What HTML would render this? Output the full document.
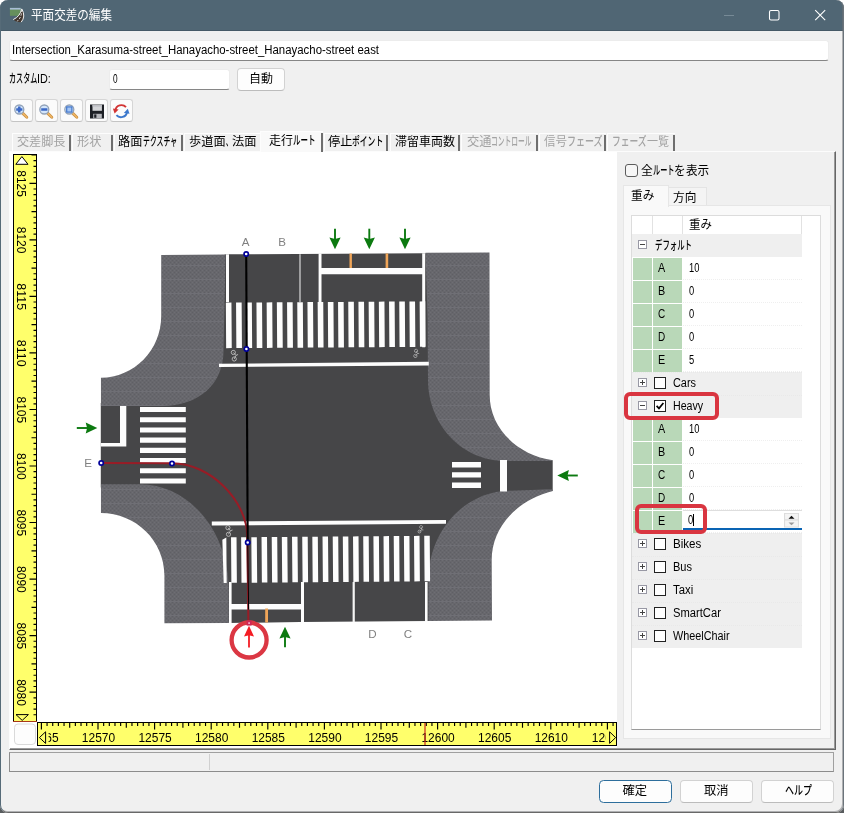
<!DOCTYPE html>
<html lang="ja">
<head>
<meta charset="utf-8">
<title>平面交差の編集</title>
<style>
*{box-sizing:border-box;margin:0;padding:0}
html,body{width:844px;height:813px;overflow:hidden;background:#fff}
body{font-family:"Liberation Sans","Noto Sans CJK JP",sans-serif;font-size:12px;color:#000;position:relative;line-height:1.3}
.abs{position:absolute}
#win{position:absolute;left:0;top:0;width:844px;height:813px;will-change:transform;background:#f0f0f0;border-radius:8px;overflow:hidden}
#frame{position:absolute;left:0;top:0;width:844px;height:813px;border-radius:8px;border:1px solid #566b78;border-top:none;border-right:1px solid #6b747b;border-bottom:1px solid #686868;box-shadow:inset -1px -1px 0 rgba(110,112,116,.5);z-index:50;pointer-events:none}
#cnr{position:absolute;left:0;top:800px;width:844px;height:13px;background:#585c5e}
#title{position:absolute;left:0;top:0;width:844px;height:31px;background:#506674;border-bottom:1px solid #465a67}
.tb{position:absolute;background:#fff;border:1px solid #ececec;border-bottom:1px solid #868686;border-radius:3px;white-space:nowrap;overflow:hidden}
.btn{position:absolute;background:#fdfdfd;border:1px solid #d2d2d2;border-bottom-color:#bcbcbc;border-radius:4px;white-space:nowrap}
.tool{position:absolute;top:99px;width:23px;height:23px;background:#fbfbfb;border:1px solid #d6d6d6;border-bottom-color:#c4c4c4;border-radius:3px}
.tool svg{position:absolute;left:0;top:.5px}
.tab{position:absolute;top:133px;height:18px;border-left:1px solid #fdfdfd;border-top:1px solid #fdfdfd;white-space:nowrap;overflow:hidden;background:#f0f0f0}
.tab i{position:absolute;right:0;top:1px;bottom:0;width:2px;background:#6e6e6e}
.tab.dis{color:#a3a3a3}
.tab.sel{top:131px;height:21px;background:#f9f9f9;z-index:3}
.tab .t{position:absolute;left:0;top:1px;white-space:nowrap}
.tab.sel .t{top:2px}
</style>
</head>
<body>
<div id="cnr"></div>
<div id="win">
<div id="title">
<svg class="abs" style="left:8px;top:7px" width="18" height="18" viewBox="0 0 18 18">
<rect x="1.9" y="0.9" width="10.8" height="7.9" fill="#66905c"/>
<rect x="1.9" y="0.9" width="10.8" height="1.7" fill="#a9bdd6"/>
<path d="M13.7 1.7 Q12.6 9.4 5.3 12.7 L8.6 14.8 L13.2 15.3 Q18.2 9.6 13.7 1.7 Z" fill="#43372f"/>
<path d="M13.6 1.9 Q12.4 9.2 5.2 12.6" stroke="#f2f2f2" stroke-width="1" fill="none"/>
<path d="M13.8 1.9 Q18 9.4 13.2 15.2" stroke="#f2f2f2" stroke-width="1" fill="none"/>
<path d="M13.7 2.4 Q14.2 10 8.8 14.6" stroke="#f2f2f2" stroke-width="0.9" stroke-dasharray="2.4 1.5" fill="none"/>
</svg>
<div class="abs" style="left:31px;top:7px;color:#fff;white-space:nowrap"><span style="display:inline-block;width:81.00px;height:16.4px;vertical-align:top;"><span style="display:inline-block;white-space:nowrap;font-size:12.60px;transform:scaleX(0.9184);transform-origin:0 0">平面交差の編集</span></span></div>
<svg class="abs" style="left:720px;top:6px" width="120" height="20" viewBox="720 6 120 20">
<path d="M724 15.5H734" stroke="#778a96" stroke-width="1"/>
<rect x="769.5" y="10.5" width="9.5" height="9.5" rx="1.5" fill="none" stroke="#fff" stroke-width="1.1"/>
<path d="M815.2 10.2L825.2 20.2M825.2 10.2L815.2 20.2" stroke="#fff" stroke-width="1.1"/>
</svg>
</div>
<div class="tb" style="left:9px;top:40px;width:820px;height:21px"><div class="abs" style="left:2px;top:2px"><span style="display:inline-block;width:367.00px;height:15.6px;vertical-align:top;"><span style="display:inline-block;white-space:nowrap;font-size:12.00px;transform:scaleX(0.9503);transform-origin:0 0">Intersection_Karasuma-street_Hanayacho-street_Hanayacho-street east</span></span></div></div>
<div class="abs" style="left:8.7px;top:71.6px;white-space:nowrap"><span style="display:inline-block;width:28.30px;height:15.6px;vertical-align:top;font-weight:500;"><span style="display:inline-block;white-space:nowrap;font-size:12.00px;transform:scaleX(0.5896);transform-origin:0 0">カスタム</span></span><span style="display:inline-block;width:13.80px;height:15.6px;vertical-align:top;"><span style="display:inline-block;white-space:nowrap;font-size:12.00px;transform:scaleX(0.9000);transform-origin:0 0">ID:</span></span></div>
<div class="tb" style="left:109px;top:69px;width:121px;height:21px"><div class="abs" style="left:2.6px;top:2px"><span style="display:inline-block;width:4.60px;height:15.6px;vertical-align:top;font-weight:500;"><span style="display:inline-block;white-space:nowrap;font-size:12.00px;transform:scaleX(0.6893);transform-origin:0 0">0</span></span></div></div>
<div class="btn" style="left:237px;top:68px;width:48px;height:23px"><div class="abs" style="left:11px;top:3px"><span style="display:inline-block;width:24.00px;height:15.6px;vertical-align:top;"><span style="display:inline-block;white-space:nowrap;font-size:12.00px;transform:scaleX(1.0000);transform-origin:0 0">自動</span></span></div></div>
<div class="tool" style="left:10px"><svg width="20" height="20" viewBox="0 0 20 20"><path d="M11.8 12.4L15.8 16.2" stroke="#c98e40" stroke-width="2.9" stroke-linecap="round"/><path d="M11.8 12.4L15.8 16.2" stroke="#efb666" stroke-width="1.5" stroke-linecap="round"/><circle cx="8.3" cy="8.5" r="4.5" fill="#d3e5fb" stroke="#93a3b8" stroke-width="1.3"/><path d="M5.2 8.5H11.4M8.3 5.4V11.6" stroke="#3b68c6" stroke-width="2.5"/></svg></div>
<div class="tool" style="left:35px"><svg width="20" height="20" viewBox="0 0 20 20"><path d="M11.8 12.4L15.8 16.2" stroke="#c98e40" stroke-width="2.9" stroke-linecap="round"/><path d="M11.8 12.4L15.8 16.2" stroke="#efb666" stroke-width="1.5" stroke-linecap="round"/><circle cx="8.3" cy="8.5" r="4.5" fill="#d3e5fb" stroke="#93a3b8" stroke-width="1.3"/><path d="M5.2 8.5H11.4" stroke="#3b68c6" stroke-width="2.5"/></svg></div>
<div class="tool" style="left:60px"><svg width="20" height="20" viewBox="0 0 20 20"><path d="M11.8 12.4L15.8 16.2" stroke="#c98e40" stroke-width="2.9" stroke-linecap="round"/><path d="M11.8 12.4L15.8 16.2" stroke="#efb666" stroke-width="1.5" stroke-linecap="round"/><circle cx="8.3" cy="8.5" r="4.5" fill="#d3e5fb" stroke="#93a3b8" stroke-width="1.3"/><rect x="5.7" y="5.9" width="5.2" height="5.2" fill="#a4c6f4" stroke="#4377cc" stroke-width="1.2"/></svg></div>
<div class="tool" style="left:85px"><svg width="20" height="20" viewBox="0 0 20 20"><path d="M4 3.5H18V17.5H4Z" fill="#1d1f25"/><rect x="6.5" y="3.8" width="9.4" height="6" fill="#d4d5d8"/><rect x="6.5" y="3.8" width="9.4" height="1.8" fill="#bdbec3"/><rect x="7.2" y="12.8" width="8.6" height="4.7" fill="#b5b6bb"/><rect x="8.2" y="13.4" width="2.2" height="3.4" fill="#1d1f25"/></svg></div>
<div class="tool" style="left:110px"><svg width="20" height="20" viewBox="0 0 20 20"><path d="M4.3 9.4A6.2 6.2 0 0 1 15 6.2" stroke="#d23434" stroke-width="1.9" fill="none"/><path d="M1.9 7.6L7.6 8.4L3.6 12.6Z" fill="#d23434"/><path d="M16.1 11A6.2 6.2 0 0 1 5.4 14.2" stroke="#3c78cc" stroke-width="1.9" fill="none"/><path d="M18.5 12.8L12.8 12L16.8 7.8Z" fill="#3c78cc"/></svg></div>
<div class="tab dis" style="left:12px;width:59px"><div class="t" style="left:4.0px"><span style="display:inline-block;width:48.50px;height:16.0px;vertical-align:top;"><span style="display:inline-block;white-space:nowrap;font-size:12.30px;transform:scaleX(0.9858);transform-origin:0 0">交差脚長</span></span></div><i></i></div>
<div class="tab dis" style="left:72px;width:41px"><div class="t" style="left:3.5px"><span style="display:inline-block;width:24.50px;height:16.0px;vertical-align:top;"><span style="display:inline-block;white-space:nowrap;font-size:12.30px;transform:scaleX(0.9959);transform-origin:0 0">形状</span></span></div><i></i></div>
<div class="tab " style="left:114px;width:69px"><div class="t" style="left:3.0px"><span style="display:inline-block;width:24.50px;height:16.0px;vertical-align:top;"><span style="display:inline-block;white-space:nowrap;font-size:12.30px;transform:scaleX(0.9959);transform-origin:0 0">路面</span></span><span style="display:inline-block;width:34.50px;height:16.0px;vertical-align:top;font-weight:500;"><span style="display:inline-block;white-space:nowrap;font-size:12.30px;transform:scaleX(0.5610);transform-origin:0 0">テクスチャ</span></span></div><i></i></div>
<div class="tab " style="left:184px;width:78px"><div class="t" style="left:4.0px"><span style="display:inline-block;width:36.70px;height:16.0px;vertical-align:top;"><span style="display:inline-block;white-space:nowrap;font-size:12.30px;transform:scaleX(0.9946);transform-origin:0 0">歩道面</span></span><span style="display:inline-block;width:6.00px;height:16.0px;vertical-align:top;font-weight:500;"><span style="display:inline-block;white-space:nowrap;font-size:12.30px;transform:scaleX(0.4878);transform-origin:0 0">、</span></span><span style="display:inline-block;width:24.50px;height:16.0px;vertical-align:top;"><span style="display:inline-block;white-space:nowrap;font-size:12.30px;transform:scaleX(0.9959);transform-origin:0 0">法面</span></span></div><i></i></div>
<div class="tab sel" style="left:260px;width:63px"><div class="t" style="left:8.0px"><span style="display:inline-block;width:24.00px;height:16.0px;vertical-align:top;"><span style="display:inline-block;white-space:nowrap;font-size:12.30px;transform:scaleX(0.9756);transform-origin:0 0">走行</span></span><span style="display:inline-block;width:22.50px;height:16.0px;vertical-align:top;font-weight:500;"><span style="display:inline-block;white-space:nowrap;font-size:12.30px;transform:scaleX(0.6098);transform-origin:0 0">ルート</span></span></div><i></i></div>
<div class="tab " style="left:324px;width:64px"><div class="t" style="left:2.5px"><span style="display:inline-block;width:24.30px;height:16.0px;vertical-align:top;"><span style="display:inline-block;white-space:nowrap;font-size:12.30px;transform:scaleX(0.9878);transform-origin:0 0">停止</span></span><span style="display:inline-block;width:31.20px;height:16.0px;vertical-align:top;font-weight:500;"><span style="display:inline-block;white-space:nowrap;font-size:12.30px;transform:scaleX(0.6341);transform-origin:0 0">ポイント</span></span></div><i></i></div>
<div class="tab " style="left:390px;width:70px"><div class="t" style="left:3.5px"><span style="display:inline-block;width:60.00px;height:16.0px;vertical-align:top;"><span style="display:inline-block;white-space:nowrap;font-size:12.30px;transform:scaleX(0.9756);transform-origin:0 0">滞留車両数</span></span></div><i></i></div>
<div class="tab dis" style="left:461px;width:77px"><div class="t" style="left:4.5px"><span style="display:inline-block;width:24.50px;height:16.0px;vertical-align:top;"><span style="display:inline-block;white-space:nowrap;font-size:12.30px;transform:scaleX(0.9959);transform-origin:0 0">交通</span></span><span style="display:inline-block;width:40.50px;height:16.0px;vertical-align:top;font-weight:500;"><span style="display:inline-block;white-space:nowrap;font-size:12.30px;transform:scaleX(0.5488);transform-origin:0 0">コントロール</span></span></div><i></i></div>
<div class="tab dis" style="left:539px;width:67px"><div class="t" style="left:4.0px"><span style="display:inline-block;width:23.00px;height:16.0px;vertical-align:top;"><span style="display:inline-block;white-space:nowrap;font-size:12.30px;transform:scaleX(0.9350);transform-origin:0 0">信号</span></span><span style="display:inline-block;width:36.00px;height:16.0px;vertical-align:top;font-weight:500;"><span style="display:inline-block;white-space:nowrap;font-size:12.30px;transform:scaleX(0.7317);transform-origin:0 0">フェーズ</span></span></div><i></i></div>
<div class="tab dis" style="left:607px;width:68px"><div class="t" style="left:4.0px"><span style="display:inline-block;width:35.00px;height:16.0px;vertical-align:top;font-weight:500;"><span style="display:inline-block;white-space:nowrap;font-size:12.30px;transform:scaleX(0.7114);transform-origin:0 0">フェーズ</span></span><span style="display:inline-block;width:22.00px;height:16.0px;vertical-align:top;"><span style="display:inline-block;white-space:nowrap;font-size:12.30px;transform:scaleX(0.8943);transform-origin:0 0">一覧</span></span></div><i></i></div>
<div class="abs" style="left:9px;top:151px;width:827px;height:599px;background:#f0f0f0;border-left:1px solid #fcfcfc;border-top:1px solid #fcfcfc;border-right:1px solid #666;border-bottom:1px solid #666"></div>
<div class="abs" style="left:10px;top:152px;width:825px;height:597px;border-right:1px solid #9a9a9a;border-bottom:1px solid #9a9a9a"></div>
<svg class="abs" style="left:10px;top:152px" width="607" height="596" viewBox="10 152 607 596" font-family="'Liberation Sans',sans-serif">
<rect x="10" y="152" width="607" height="597" fill="#fff"/>
<path d="M222.5 255.6 L226 254.3 L425 253.2 L428.5 253.6 L431 320 L431.5 386 L470 432 L506 457.5 L540 459.8 L552.7 460.7 L552.7 490.7 L540 491.8 L509 494.5 L470 520 L432 574 L431.5 619 L429 621 L300 622 L228.8 623 L225.5 621 L225.5 592 L200 528 L138 487.5 L100.8 487.5 L100.8 403 L160 403 L200 385 L220.5 349 Z" fill="#464648"/>
<clipPath id="cl"><rect x="100.8" y="250" width="451.9" height="380"/></clipPath>
<defs><pattern id="tx" width="4" height="14" patternUnits="userSpaceOnUse"><rect width="4" height="14" fill="#67676c"/><path d="M0 0h1v1h-1zM2 2h1v1h-1zM0 4h1v1h-1zM2 6h1v1h-1zM0 8h1v1h-1zM2 10h1v1h-1zM0 12h1v1h-1z" fill="#5f5f65"/><path d="M2 0h1v1h-1zM0 2h1v1h-1zM2 4h1v1h-1zM0 6h1v1h-1zM2 8h1v1h-1zM0 10h1v1h-1zM2 12h1v1h-1z" fill="#6e6e74"/><rect y="13" width="4" height="1" fill="#6f6f75"/></pattern></defs>
<path d="M161.2 255 L225.6 254.6 L223.5 351 C223.5 384.0 198.9 406.0 162.0 406.0 L100.8 406 L100.8 377.7 C134.2 377.7 161.2 350.1 161.2 316.0 Z" fill="url(#tx)" clip-path="url(#cl)"/>
<path d="M425.5 252.8 L489.5 252.5 L489.7 395 C489.7 431.5 523.4 461.0 565.0 461.0 L505 461 C462.5 461.0 428.0 424.7 428.0 380.0 L427.6 320 Z" fill="url(#tx)" clip-path="url(#cl)"/>
<path d="M575 488.5 C529.0 488.5 491.7 520.5 491.7 560.0 L492 620.4 L428.4 620.9 L428.5 580 C428.5 530.7 465.0 490.7 510.0 490.7 Z" fill="url(#tx)" clip-path="url(#cl)"/>
<path d="M100.8 484.2 L140 484.2 C189.0 484.2 228.8 531.6 228.8 590.0 L228.8 623 L164.4 623.3 L164.4 575 C164.4 540.7 135.9 512.9 100.8 512.9 Z" fill="url(#tx)" clip-path="url(#cl)"/>
<path d="M226.0 302h5.6v45.5h-5.6zM236.2 302h5.6v45.5h-5.6zM246.4 302h5.6v45.5h-5.6zM256.6 302h5.6v45.5h-5.6zM266.8 302h5.6v45.5h-5.6zM277.0 302h5.6v45.5h-5.6zM287.2 302h5.6v45.5h-5.6zM297.4 302h5.6v45.5h-5.6zM307.6 302h5.6v45.5h-5.6zM317.8 302h5.6v45.5h-5.6zM328.0 302h5.6v45.5h-5.6zM338.2 302h5.6v45.5h-5.6zM348.4 302h5.6v45.5h-5.6zM358.6 302h5.6v45.5h-5.6zM368.8 302h5.6v45.5h-5.6zM379.0 302h5.6v45.5h-5.6zM389.2 302h5.6v45.5h-5.6zM399.4 302h5.6v45.5h-5.6zM409.6 302h5.6v45.5h-5.6zM419.8 302h5.6v45.5h-5.6z" fill="#fdfdfd" transform="rotate(-0.38 325.5 324.7)"/>
<path d="M231.2 536.6h5.5v45.5h-5.5zM241.3 536.6h5.5v45.5h-5.5zM251.5 536.6h5.5v45.5h-5.5zM261.7 536.6h5.5v45.5h-5.5zM271.9 536.6h5.5v45.5h-5.5zM282.0 536.6h5.5v45.5h-5.5zM292.2 536.6h5.5v45.5h-5.5zM302.4 536.6h5.5v45.5h-5.5zM312.5 536.6h5.5v45.5h-5.5zM322.7 536.6h5.5v45.5h-5.5zM332.9 536.6h5.5v45.5h-5.5zM343.0 536.6h5.5v45.5h-5.5zM353.2 536.6h5.5v45.5h-5.5zM363.4 536.6h5.5v45.5h-5.5zM373.6 536.6h5.5v45.5h-5.5zM383.7 536.6h5.5v45.5h-5.5zM393.9 536.6h5.5v45.5h-5.5zM404.1 536.6h5.5v45.5h-5.5zM414.2 536.6h5.5v45.5h-5.5zM424.4 536.6h5.5v45.5h-5.5zM222.5 539 L226.5 536.6 L226.5 582.1 L223.5 582.1z" fill="#fdfdfd" transform="rotate(-0.45 325.5 559.3)"/>
<path d="M140 407.0h45.8v5.1h-45.8zM140 417.2h45.8v5.1h-45.8zM140 427.4h45.8v5.1h-45.8zM140 437.6h45.8v5.1h-45.8zM140 447.8h45.8v5.1h-45.8zM140 458.0h45.8v5.1h-45.8zM140 468.2h45.8v5.1h-45.8zM140 478.4h45.8v5.1h-45.8zM452 462.0h29v5.4h-29zM452 472.2h29v5.4h-29zM452 482.5h29v5.4h-29zM226 254.3h3v48h-3zM318.6 253.6h2.9v48.4h-2.9zM321 268h101.5v6.2h-101.5zM422.2 253.2h3v94h-3zM229 582h2.6v41h-2.6zM231 604h70.5v5.6h-70.5zM301 582h3v40h-3zM425 582h2.6v39.5h-2.6zM120 406h6.3v40.5h-6.3zM100.7 443h25.5v3.5h-25.5zM500 460h7v31.5h-7zM219 363.8 L428.8 361.8 L428.8 365.4 L219 367zM211.8 521.6 L446 520 L446 523.8 L211.8 525.6z" fill="#fdfdfd"/>
<path d="M300 254.3V302" stroke="#e8e8e8" stroke-width="1.1"/>
<path d="M353.7 582V622" stroke="#f4f4f4" stroke-width="2.2"/>
<path d="M349.5 253.6h2.4v14.4h-2.4zM385.6 253.5h2.6v14.5h-2.6zM265.2 608.5h2.8v14h-2.8z" fill="#f0a558"/>
<g transform="translate(233.8 355.7) rotate(-8) scale(1.00)" fill="none" stroke="#bdbdbd" stroke-width="0.85"><circle cx="0" cy="-3.3" r="2.1"/><circle cx="0" cy="3.3" r="2.1"/><path d="M0 -3.3L2.2 0L0 3.3M2.2 0L4.4 -0.6"/></g>
<g transform="translate(415.7 353.4) rotate(8) scale(0.78)" fill="none" stroke="#bdbdbd" stroke-width="0.85"><circle cx="0" cy="-3.3" r="2.1"/><circle cx="0" cy="3.3" r="2.1"/><path d="M0 -3.3L2.2 0L0 3.3M2.2 0L4.4 -0.6"/></g>
<g transform="translate(228.2 531.0) rotate(-5) scale(1.00)" fill="none" stroke="#bdbdbd" stroke-width="0.85"><circle cx="0" cy="-3.3" r="2.1"/><circle cx="0" cy="3.3" r="2.1"/><path d="M0 -3.3L2.2 0L0 3.3M2.2 0L4.4 -0.6"/></g>
<g transform="translate(420.3 529.3) rotate(20) scale(0.72)" fill="none" stroke="#bdbdbd" stroke-width="0.85"><circle cx="0" cy="-3.3" r="2.1"/><circle cx="0" cy="3.3" r="2.1"/><path d="M0 -3.3L2.2 0L0 3.3M2.2 0L4.4 -0.6"/></g>
<path d="M101.2 463 L172 463.2 C209.6 463.2 247.2 500 247.3 537 L248.4 622.5" fill="none" stroke="#981c26" stroke-width="2"/>
<path d="M246.2 254 L247.7 542.5" fill="none" stroke="#000" stroke-width="2.1"/>
<path d="M247.7 542.5 L248.6 609.5" fill="none" stroke="#000" stroke-width="1"/>
<circle cx="246.2" cy="254.0" r="2.15" fill="#fff" stroke="#00009a" stroke-width="1.7"/>
<circle cx="246.4" cy="349.0" r="2.15" fill="#fff" stroke="#00009a" stroke-width="1.7"/>
<circle cx="101.2" cy="463.0" r="2.15" fill="#fff" stroke="#00009a" stroke-width="1.7"/>
<circle cx="172.0" cy="463.5" r="2.15" fill="#fff" stroke="#00009a" stroke-width="1.7"/>
<circle cx="247.7" cy="542.5" r="2.15" fill="#fff" stroke="#00009a" stroke-width="1.7"/>
<text x="245.7" y="246.0" font-size="11.6" fill="#808080" text-anchor="middle">A</text>
<text x="282.0" y="246.0" font-size="11.6" fill="#808080" text-anchor="middle">B</text>
<text x="88.0" y="467.3" font-size="11.6" fill="#808080" text-anchor="middle">E</text>
<text x="372.5" y="638.3" font-size="11.6" fill="#808080" text-anchor="middle">D</text>
<text x="408.0" y="638.3" font-size="11.6" fill="#808080" text-anchor="middle">C</text>
<g transform="translate(335.0 249.2) rotate(90)"><path d="M-20.5 0H-4" stroke="#0c7a10" stroke-width="1.9"/><path d="M0 0L-11.6 -5.6L-10.2 0L-11.6 5.6z" fill="#0c7a10"/></g>
<g transform="translate(369.3 249.2) rotate(90)"><path d="M-20.5 0H-4" stroke="#0c7a10" stroke-width="1.9"/><path d="M0 0L-11.6 -5.6L-10.2 0L-11.6 5.6z" fill="#0c7a10"/></g>
<g transform="translate(405.0 249.2) rotate(90)"><path d="M-20.5 0H-4" stroke="#0c7a10" stroke-width="1.9"/><path d="M0 0L-11.6 -5.6L-10.2 0L-11.6 5.6z" fill="#0c7a10"/></g>
<g transform="translate(97.3 428.0) rotate(0)"><path d="M-20.5 0H-4" stroke="#0c7a10" stroke-width="1.9"/><path d="M0 0L-11.6 -5.6L-10.2 0L-11.6 5.6z" fill="#0c7a10"/></g>
<g transform="translate(557.3 475.5) rotate(180)"><path d="M-20.5 0H-4" stroke="#0c7a10" stroke-width="1.9"/><path d="M0 0L-11.6 -5.6L-10.2 0L-11.6 5.6z" fill="#0c7a10"/></g>
<g transform="translate(285.0 626.8) rotate(-90)"><path d="M-20.5 0H-4" stroke="#0c7a10" stroke-width="1.9"/><path d="M0 0L-11.6 -5.6L-10.2 0L-11.6 5.6z" fill="#0c7a10"/></g>
<g transform="translate(249.0 625.8) rotate(-90)"><path d="M-21.8 0H-4" stroke="#f41c24" stroke-width="1.8"/><path d="M0 0L-10.8 -5.0L-9.4 0L-10.8 5.0z" fill="#f41c24"/></g>
<circle cx="249.1" cy="640" r="17.5" fill="none" stroke="#db3743" stroke-width="4.3"/>
<rect x="246.6" y="620.6" width="5" height="5" fill="#cf2656"/><rect x="248.2" y="622.2" width="1.8" height="1.8" fill="#f3a0bd"/>
<rect x="13.5" y="154.5" width="23" height="567" fill="#ffff6b" stroke="#000" stroke-width="1"/>
<path d="M13 721.5H37" stroke="#a83a18" stroke-width="1"/>
<rect x="37.5" y="722.5" width="579" height="23" fill="#ffff6b" stroke="#000" stroke-width="1"/>
<path d="M36.5 155.03h-5M36.5 160.68h-3M36.5 166.34h-3M36.5 171.99h-3M36.5 177.65h-3M36.5 183.30h-7M36.5 188.95h-3M36.5 194.61h-3M36.5 200.26h-3M36.5 205.92h-3M36.5 211.57h-5M36.5 217.22h-3M36.5 222.88h-3M36.5 228.53h-3M36.5 234.19h-3M36.5 239.84h-7M36.5 245.49h-3M36.5 251.15h-3M36.5 256.80h-3M36.5 262.46h-3M36.5 268.11h-5M36.5 273.76h-3M36.5 279.42h-3M36.5 285.07h-3M36.5 290.73h-3M36.5 296.38h-7M36.5 302.03h-3M36.5 307.69h-3M36.5 313.34h-3M36.5 319.00h-3M36.5 324.65h-5M36.5 330.30h-3M36.5 335.96h-3M36.5 341.61h-3M36.5 347.27h-3M36.5 352.92h-7M36.5 358.57h-3M36.5 364.23h-3M36.5 369.88h-3M36.5 375.54h-3M36.5 381.19h-5M36.5 386.84h-3M36.5 392.50h-3M36.5 398.15h-3M36.5 403.81h-3M36.5 409.46h-7M36.5 415.11h-3M36.5 420.77h-3M36.5 426.42h-3M36.5 432.08h-3M36.5 437.73h-5M36.5 443.38h-3M36.5 449.04h-3M36.5 454.69h-3M36.5 460.35h-3M36.5 466.00h-7M36.5 471.65h-3M36.5 477.31h-3M36.5 482.96h-3M36.5 488.62h-3M36.5 494.27h-5M36.5 499.92h-3M36.5 505.58h-3M36.5 511.23h-3M36.5 516.89h-3M36.5 522.54h-7M36.5 528.19h-3M36.5 533.85h-3M36.5 539.50h-3M36.5 545.16h-3M36.5 550.81h-5M36.5 556.46h-3M36.5 562.12h-3M36.5 567.77h-3M36.5 573.43h-3M36.5 579.08h-7M36.5 584.73h-3M36.5 590.39h-3M36.5 596.04h-3M36.5 601.70h-3M36.5 607.35h-5M36.5 613.00h-3M36.5 618.66h-3M36.5 624.31h-3M36.5 629.97h-3M36.5 635.62h-7M36.5 641.27h-3M36.5 646.93h-3M36.5 652.58h-3M36.5 658.24h-3M36.5 663.89h-5M36.5 669.54h-3M36.5 675.20h-3M36.5 680.85h-3M36.5 686.51h-3M36.5 692.16h-7M36.5 697.81h-3M36.5 703.47h-3M36.5 709.12h-3M36.5 714.78h-3M41.40 723v6.5M47.06 723v3.0M52.72 723v3.0M58.38 723v3.0M64.04 723v3.0M69.70 723v4.8M75.36 723v3.0M81.02 723v3.0M86.68 723v3.0M92.34 723v3.0M98.00 723v6.5M103.66 723v3.0M109.32 723v3.0M114.98 723v3.0M120.64 723v3.0M126.30 723v4.8M131.96 723v3.0M137.62 723v3.0M143.28 723v3.0M148.94 723v3.0M154.60 723v6.5M160.26 723v3.0M165.92 723v3.0M171.58 723v3.0M177.24 723v3.0M182.90 723v4.8M188.56 723v3.0M194.22 723v3.0M199.88 723v3.0M205.54 723v3.0M211.20 723v6.5M216.86 723v3.0M222.52 723v3.0M228.18 723v3.0M233.84 723v3.0M239.50 723v4.8M245.16 723v3.0M250.82 723v3.0M256.48 723v3.0M262.14 723v3.0M267.80 723v6.5M273.46 723v3.0M279.12 723v3.0M284.78 723v3.0M290.44 723v3.0M296.10 723v4.8M301.76 723v3.0M307.42 723v3.0M313.08 723v3.0M318.74 723v3.0M324.40 723v6.5M330.06 723v3.0M335.72 723v3.0M341.38 723v3.0M347.04 723v3.0M352.70 723v4.8M358.36 723v3.0M364.02 723v3.0M369.68 723v3.0M375.34 723v3.0M381.00 723v6.5M386.66 723v3.0M392.32 723v3.0M397.98 723v3.0M403.64 723v3.0M409.30 723v4.8M414.96 723v3.0M420.62 723v3.0M426.28 723v3.0M431.94 723v3.0M437.60 723v6.5M443.26 723v3.0M448.92 723v3.0M454.58 723v3.0M460.24 723v3.0M465.90 723v4.8M471.56 723v3.0M477.22 723v3.0M482.88 723v3.0M488.54 723v3.0M494.20 723v6.5M499.86 723v3.0M505.52 723v3.0M511.18 723v3.0M516.84 723v3.0M522.50 723v4.8M528.16 723v3.0M533.82 723v3.0M539.48 723v3.0M545.14 723v3.0M550.80 723v6.5M556.46 723v3.0M562.12 723v3.0M567.78 723v3.0M573.44 723v3.0M579.10 723v4.8M584.76 723v3.0M590.42 723v3.0M596.08 723v3.0M601.74 723v3.0M607.40 723v6.5M613.06 723v3.0" stroke="#000" stroke-width="1.15" fill="none"/>
<text transform="translate(16.9 183.6) rotate(90)" font-size="12.8" text-anchor="middle" textLength="26.7" lengthAdjust="spacingAndGlyphs">8125</text>
<text transform="translate(16.9 240.1) rotate(90)" font-size="12.8" text-anchor="middle" textLength="26.7" lengthAdjust="spacingAndGlyphs">8120</text>
<text transform="translate(16.9 296.7) rotate(90)" font-size="12.8" text-anchor="middle" textLength="26.7" lengthAdjust="spacingAndGlyphs">8115</text>
<text transform="translate(16.9 353.2) rotate(90)" font-size="12.8" text-anchor="middle" textLength="26.7" lengthAdjust="spacingAndGlyphs">8110</text>
<text transform="translate(16.9 409.8) rotate(90)" font-size="12.8" text-anchor="middle" textLength="26.7" lengthAdjust="spacingAndGlyphs">8105</text>
<text transform="translate(16.9 466.3) rotate(90)" font-size="12.8" text-anchor="middle" textLength="26.7" lengthAdjust="spacingAndGlyphs">8100</text>
<text transform="translate(16.9 522.8) rotate(90)" font-size="12.8" text-anchor="middle" textLength="26.7" lengthAdjust="spacingAndGlyphs">8095</text>
<text transform="translate(16.9 579.4) rotate(90)" font-size="12.8" text-anchor="middle" textLength="26.7" lengthAdjust="spacingAndGlyphs">8090</text>
<text transform="translate(16.9 635.9) rotate(90)" font-size="12.8" text-anchor="middle" textLength="26.7" lengthAdjust="spacingAndGlyphs">8085</text>
<text transform="translate(16.9 692.5) rotate(90)" font-size="12.8" text-anchor="middle" textLength="26.7" lengthAdjust="spacingAndGlyphs">8080</text>
<svg x="48.6" y="725" width="30" height="20" viewBox="48.6 725 30 20"><text x="41.9" y="741.9" font-size="12.8" text-anchor="middle" textLength="33.3" lengthAdjust="spacingAndGlyphs">12565</text></svg>
<text x="98.5" y="741.9" font-size="12.8" text-anchor="middle" textLength="33.3" lengthAdjust="spacingAndGlyphs">12570</text>
<text x="155.1" y="741.9" font-size="12.8" text-anchor="middle" textLength="33.3" lengthAdjust="spacingAndGlyphs">12575</text>
<text x="211.7" y="741.9" font-size="12.8" text-anchor="middle" textLength="33.3" lengthAdjust="spacingAndGlyphs">12580</text>
<text x="268.3" y="741.9" font-size="12.8" text-anchor="middle" textLength="33.3" lengthAdjust="spacingAndGlyphs">12585</text>
<text x="324.9" y="741.9" font-size="12.8" text-anchor="middle" textLength="33.3" lengthAdjust="spacingAndGlyphs">12590</text>
<text x="381.5" y="741.9" font-size="12.8" text-anchor="middle" textLength="33.3" lengthAdjust="spacingAndGlyphs">12595</text>
<text x="438.1" y="741.9" font-size="12.8" text-anchor="middle" textLength="33.3" lengthAdjust="spacingAndGlyphs">12600</text>
<text x="494.7" y="741.9" font-size="12.8" text-anchor="middle" textLength="33.3" lengthAdjust="spacingAndGlyphs">12605</text>
<text x="551.3" y="741.9" font-size="12.8" text-anchor="middle" textLength="33.3" lengthAdjust="spacingAndGlyphs">12610</text>
<svg x="585" y="725" width="20.6" height="20" viewBox="585 725 20.6 20"><text x="608.4" y="741.9" font-size="12.8" text-anchor="middle" textLength="33.3" lengthAdjust="spacingAndGlyphs">12615</text></svg>
<path d="M425 723V745" stroke="#c8281e" stroke-width="1.2"/>
<path d="M15.8 164.3L21.9 156.6L28 164.3z" fill="#fff" stroke="#000" stroke-width="1"/>
<path d="M16 714.6L28.4 714.6L22.2 720.4z" fill="#ffff6b" stroke="#000" stroke-width="1"/>
<path d="M45.6 731.8V743.4L39.4 737.6z" fill="#ffff6b" stroke="#000" stroke-width="1"/>
<path d="M609.6 731.8V743.4L615.6 737.6z" fill="#ffff6b" stroke="#000" stroke-width="1"/>
<rect x="14.5" y="724" width="21" height="20.5" rx="3.5" fill="#fdfdfd" stroke="#dadada" stroke-width="1"/>
</svg>
<div class="abs" style="left:625px;top:164px;width:13px;height:13px;background:#f6f6f6;border:1px solid #5c5c5c;border-radius:3px"></div>
<div class="abs" style="left:641px;top:163.8px;white-space:nowrap"><span style="display:inline-block;width:11.80px;height:16.0px;vertical-align:top;"><span style="display:inline-block;white-space:nowrap;font-size:12.30px;transform:scaleX(0.9593);transform-origin:0 0">全</span></span><span style="display:inline-block;width:21.50px;height:16.0px;vertical-align:top;font-weight:500;"><span style="display:inline-block;white-space:nowrap;font-size:12.30px;transform:scaleX(0.5827);transform-origin:0 0">ルート</span></span><span style="display:inline-block;width:11.60px;height:16.0px;vertical-align:top;"><span style="display:inline-block;white-space:nowrap;font-size:12.30px;transform:scaleX(0.9431);transform-origin:0 0">を</span></span><span style="display:inline-block;width:23.20px;height:16.0px;vertical-align:top;"><span style="display:inline-block;white-space:nowrap;font-size:12.30px;transform:scaleX(0.9431);transform-origin:0 0">表示</span></span></div>
<div class="abs" style="left:623px;top:205px;width:208px;height:534px;background:#f9f9f9;border:1px solid #e6e6e6"></div>
<div class="abs" style="left:668px;top:187px;width:39px;height:18px;background:#f4f4f4;border:1px solid #e4e4e4;border-bottom:none;border-left:none"><div class="abs" style="left:5px;top:2.5px"><span style="display:inline-block;width:23.40px;height:16.0px;vertical-align:top;"><span style="display:inline-block;white-space:nowrap;font-size:12.30px;transform:scaleX(0.9512);transform-origin:0 0">方向</span></span></div></div>
<div class="abs" style="left:623px;top:185px;width:46px;height:22px;background:#f9f9f9;border:1px solid #e6e6e6;border-bottom:none"><div class="abs" style="left:7px;top:2.5px"><span style="display:inline-block;width:23.40px;height:16.0px;vertical-align:top;"><span style="display:inline-block;white-space:nowrap;font-size:12.30px;transform:scaleX(0.9512);transform-origin:0 0">重み</span></span></div></div>
<div class="abs" style="left:631px;top:215px;width:190px;height:515px;background:#fff;border:1px solid #dcdcdc;border-bottom-color:#9a9a9a"></div>
<div class="abs" style="left:632px;top:216px;width:170px;height:18px;background:#fff;border-right:1px solid #e2e2e2"><div class="abs" style="left:20px;top:0;width:1px;height:18px;background:#e2e2e2"></div><div class="abs" style="left:50px;top:0;width:1px;height:18px;background:#e2e2e2"></div><div class="abs" style="left:57px;top:2.2px"><span style="display:inline-block;width:23.00px;height:16.0px;vertical-align:top;"><span style="display:inline-block;white-space:nowrap;font-size:12.30px;transform:scaleX(0.9350);transform-origin:0 0">重み</span></span></div></div>
<div class="abs" style="left:632px;top:234px;width:170px;height:23px;background:#efefef"></div><svg class="abs" style="left:638px;top:240px" width="9" height="9" viewBox="0 0 9 9"><rect x=".5" y=".5" width="8" height="8" fill="#fff" stroke="#9898a4"/><path d="M2 4.5H7" stroke="#444" stroke-width="1"/></svg><div class="abs" style="left:654.5px;top:238.8px"><span style="display:inline-block;width:37.00px;height:16.0px;vertical-align:top;font-weight:500;"><span style="display:inline-block;white-space:nowrap;font-size:12.30px;transform:scaleX(0.6016);transform-origin:0 0">デフォルト</span></span></div>
<div class="abs" style="left:633px;top:258px;width:19px;height:22px;background:#b9d8b8"></div><div class="abs" style="left:653px;top:258px;width:29px;height:22px;background:#b9d8b8"></div><div class="abs" style="left:683px;top:279px;width:119px;height:1px;border-top:1px dotted #efefef"></div><div class="abs" style="left:657.6px;top:260.6px"><span style="display:inline-block;width:7.20px;height:15.6px;vertical-align:top;"><span style="display:inline-block;white-space:nowrap;font-size:12.00px;transform:scaleX(0.8996);transform-origin:0 0">A</span></span></div><div class="abs" style="left:688.5px;top:260.6px"><span style="display:inline-block;width:10.40px;height:15.6px;vertical-align:top;font-weight:500;"><span style="display:inline-block;white-space:nowrap;font-size:12.00px;transform:scaleX(0.7792);transform-origin:0 0">10</span></span></div>
<div class="abs" style="left:633px;top:281px;width:19px;height:22px;background:#b9d8b8"></div><div class="abs" style="left:653px;top:281px;width:29px;height:22px;background:#b9d8b8"></div><div class="abs" style="left:683px;top:302px;width:119px;height:1px;border-top:1px dotted #efefef"></div><div class="abs" style="left:657.6px;top:283.6px"><span style="display:inline-block;width:7.20px;height:15.6px;vertical-align:top;"><span style="display:inline-block;white-space:nowrap;font-size:12.00px;transform:scaleX(0.8996);transform-origin:0 0">B</span></span></div><div class="abs" style="left:688.5px;top:283.6px"><span style="display:inline-block;width:5.20px;height:15.6px;vertical-align:top;font-weight:500;"><span style="display:inline-block;white-space:nowrap;font-size:12.00px;transform:scaleX(0.7792);transform-origin:0 0">0</span></span></div>
<div class="abs" style="left:633px;top:304px;width:19px;height:22px;background:#b9d8b8"></div><div class="abs" style="left:653px;top:304px;width:29px;height:22px;background:#b9d8b8"></div><div class="abs" style="left:683px;top:325px;width:119px;height:1px;border-top:1px dotted #efefef"></div><div class="abs" style="left:657.6px;top:306.6px"><span style="display:inline-block;width:7.20px;height:15.6px;vertical-align:top;"><span style="display:inline-block;white-space:nowrap;font-size:12.00px;transform:scaleX(0.8308);transform-origin:0 0">C</span></span></div><div class="abs" style="left:688.5px;top:306.6px"><span style="display:inline-block;width:5.20px;height:15.6px;vertical-align:top;font-weight:500;"><span style="display:inline-block;white-space:nowrap;font-size:12.00px;transform:scaleX(0.7792);transform-origin:0 0">0</span></span></div>
<div class="abs" style="left:633px;top:327px;width:19px;height:22px;background:#b9d8b8"></div><div class="abs" style="left:653px;top:327px;width:29px;height:22px;background:#b9d8b8"></div><div class="abs" style="left:683px;top:348px;width:119px;height:1px;border-top:1px dotted #efefef"></div><div class="abs" style="left:657.6px;top:329.6px"><span style="display:inline-block;width:7.20px;height:15.6px;vertical-align:top;"><span style="display:inline-block;white-space:nowrap;font-size:12.00px;transform:scaleX(0.8308);transform-origin:0 0">D</span></span></div><div class="abs" style="left:688.5px;top:329.6px"><span style="display:inline-block;width:5.20px;height:15.6px;vertical-align:top;font-weight:500;"><span style="display:inline-block;white-space:nowrap;font-size:12.00px;transform:scaleX(0.7792);transform-origin:0 0">0</span></span></div>
<div class="abs" style="left:633px;top:350px;width:19px;height:22px;background:#b9d8b8"></div><div class="abs" style="left:653px;top:350px;width:29px;height:22px;background:#b9d8b8"></div><div class="abs" style="left:683px;top:371px;width:119px;height:1px;border-top:1px dotted #efefef"></div><div class="abs" style="left:657.6px;top:352.6px"><span style="display:inline-block;width:7.20px;height:15.6px;vertical-align:top;"><span style="display:inline-block;white-space:nowrap;font-size:12.00px;transform:scaleX(0.8996);transform-origin:0 0">E</span></span></div><div class="abs" style="left:688.5px;top:352.6px"><span style="display:inline-block;width:5.20px;height:15.6px;vertical-align:top;font-weight:500;"><span style="display:inline-block;white-space:nowrap;font-size:12.00px;transform:scaleX(0.7792);transform-origin:0 0">5</span></span></div>
<div class="abs" style="left:632px;top:372px;width:170px;height:23px;background:#efefef;border-top:1px dotted #e9e9e9"></div><svg class="abs" style="left:638px;top:378px" width="9" height="9" viewBox="0 0 9 9"><rect x=".5" y=".5" width="8" height="8" fill="#fff" stroke="#9898a4"/><path d="M2 4.5H7M4.5 2V7" stroke="#444" stroke-width="1"/></svg><div class="abs" style="left:654px;top:377px;width:12px;height:12px;background:#fff;border:1px solid #222"></div><div class="abs" style="left:673px;top:376.0px"><span style="display:inline-block;width:23.00px;height:15.6px;vertical-align:top;"><span style="display:inline-block;white-space:nowrap;font-size:12.00px;transform:scaleX(0.9078);transform-origin:0 0">Cars</span></span></div>
<div class="abs" style="left:632px;top:395px;width:170px;height:23px;background:#efefef;border-top:1px dotted #e9e9e9"></div><svg class="abs" style="left:638px;top:401px" width="9" height="9" viewBox="0 0 9 9"><rect x=".5" y=".5" width="8" height="8" fill="#fff" stroke="#9898a4"/><path d="M2 4.5H7" stroke="#444" stroke-width="1"/></svg><div class="abs" style="left:654px;top:400px;width:12px;height:12px;background:#fff;border:1px solid #222"></div><svg class="abs" style="left:654px;top:400px" width="12" height="12" viewBox="0 0 12 12"><path d="M2.6 5.8L5 8.4L9.4 3" fill="none" stroke="#000" stroke-width="1.7"/></svg><div class="abs" style="left:673px;top:399.0px"><span style="display:inline-block;width:30.20px;height:15.6px;vertical-align:top;"><span style="display:inline-block;white-space:nowrap;font-size:12.00px;transform:scaleX(0.8879);transform-origin:0 0">Heavy</span></span></div>
<div class="abs" style="left:633px;top:419px;width:19px;height:22px;background:#b9d8b8"></div><div class="abs" style="left:653px;top:419px;width:29px;height:22px;background:#b9d8b8"></div><div class="abs" style="left:683px;top:440px;width:119px;height:1px;border-top:1px dotted #efefef"></div><div class="abs" style="left:657.6px;top:421.6px"><span style="display:inline-block;width:7.20px;height:15.6px;vertical-align:top;"><span style="display:inline-block;white-space:nowrap;font-size:12.00px;transform:scaleX(0.8996);transform-origin:0 0">A</span></span></div><div class="abs" style="left:688.5px;top:421.6px"><span style="display:inline-block;width:10.40px;height:15.6px;vertical-align:top;font-weight:500;"><span style="display:inline-block;white-space:nowrap;font-size:12.00px;transform:scaleX(0.7792);transform-origin:0 0">10</span></span></div>
<div class="abs" style="left:633px;top:442px;width:19px;height:22px;background:#b9d8b8"></div><div class="abs" style="left:653px;top:442px;width:29px;height:22px;background:#b9d8b8"></div><div class="abs" style="left:683px;top:463px;width:119px;height:1px;border-top:1px dotted #efefef"></div><div class="abs" style="left:657.6px;top:444.6px"><span style="display:inline-block;width:7.20px;height:15.6px;vertical-align:top;"><span style="display:inline-block;white-space:nowrap;font-size:12.00px;transform:scaleX(0.8996);transform-origin:0 0">B</span></span></div><div class="abs" style="left:688.5px;top:444.6px"><span style="display:inline-block;width:5.20px;height:15.6px;vertical-align:top;font-weight:500;"><span style="display:inline-block;white-space:nowrap;font-size:12.00px;transform:scaleX(0.7792);transform-origin:0 0">0</span></span></div>
<div class="abs" style="left:633px;top:465px;width:19px;height:22px;background:#b9d8b8"></div><div class="abs" style="left:653px;top:465px;width:29px;height:22px;background:#b9d8b8"></div><div class="abs" style="left:683px;top:486px;width:119px;height:1px;border-top:1px dotted #efefef"></div><div class="abs" style="left:657.6px;top:467.6px"><span style="display:inline-block;width:7.20px;height:15.6px;vertical-align:top;"><span style="display:inline-block;white-space:nowrap;font-size:12.00px;transform:scaleX(0.8308);transform-origin:0 0">C</span></span></div><div class="abs" style="left:688.5px;top:467.6px"><span style="display:inline-block;width:5.20px;height:15.6px;vertical-align:top;font-weight:500;"><span style="display:inline-block;white-space:nowrap;font-size:12.00px;transform:scaleX(0.7792);transform-origin:0 0">0</span></span></div>
<div class="abs" style="left:633px;top:488px;width:19px;height:22px;background:#b9d8b8"></div><div class="abs" style="left:653px;top:488px;width:29px;height:22px;background:#b9d8b8"></div><div class="abs" style="left:683px;top:509px;width:119px;height:1px;border-top:1px dotted #efefef"></div><div class="abs" style="left:657.6px;top:490.6px"><span style="display:inline-block;width:7.20px;height:15.6px;vertical-align:top;"><span style="display:inline-block;white-space:nowrap;font-size:12.00px;transform:scaleX(0.8308);transform-origin:0 0">D</span></span></div><div class="abs" style="left:688.5px;top:490.6px"><span style="display:inline-block;width:5.20px;height:15.6px;vertical-align:top;font-weight:500;"><span style="display:inline-block;white-space:nowrap;font-size:12.00px;transform:scaleX(0.7792);transform-origin:0 0">0</span></span></div>
<div class="abs" style="left:633px;top:511px;width:19px;height:22px;background:#b9d8b8"></div><div class="abs" style="left:653px;top:511px;width:29px;height:22px;background:#b9d8b8"></div><div class="abs" style="left:683px;top:532px;width:119px;height:1px;border-top:1px dotted #efefef"></div><div class="abs" style="left:657.6px;top:513.6px"><span style="display:inline-block;width:7.20px;height:15.6px;vertical-align:top;"><span style="display:inline-block;white-space:nowrap;font-size:12.00px;transform:scaleX(0.8996);transform-origin:0 0">E</span></span></div><div class="abs" style="left:687.6px;top:512.8px"><span style="display:inline-block;width:5.20px;height:15.6px;vertical-align:top;font-weight:500;"><span style="display:inline-block;white-space:nowrap;font-size:12.00px;transform:scaleX(0.7792);transform-origin:0 0">0</span></span></div>
<div class="abs" style="left:683px;top:510px;width:119px;height:1px;background:#dedede"></div><div class="abs" style="left:683px;top:528px;width:119px;height:2px;background:#0a64b4"></div><div class="abs" style="left:693.4px;top:514px;width:1px;height:12px;background:#000"></div><svg class="abs" style="left:784px;top:513px" width="15" height="15" viewBox="0 0 14 16" preserveAspectRatio="none"><rect x=".5" y=".5" width="13" height="7" fill="#f4f4f4" stroke="#dcdcdc"/><rect x=".5" y="7.5" width="13" height="7.5" fill="#f4f4f4" stroke="#dcdcdc"/><path d="M4.2 6L7 2.8L9.8 6z" fill="#111"/><path d="M4.2 10L7 13L9.8 10z" fill="#9a9a9a"/></svg>
<div class="abs" style="left:632px;top:533px;width:170px;height:23px;background:#efefef;border-top:1px dotted #e9e9e9"></div><svg class="abs" style="left:638px;top:539px" width="9" height="9" viewBox="0 0 9 9"><rect x=".5" y=".5" width="8" height="8" fill="#fff" stroke="#9898a4"/><path d="M2 4.5H7M4.5 2V7" stroke="#444" stroke-width="1"/></svg><div class="abs" style="left:654px;top:538px;width:12px;height:12px;background:#fff;border:1px solid #222"></div><div class="abs" style="left:673px;top:537.0px"><span style="display:inline-block;width:28.30px;height:15.6px;vertical-align:top;"><span style="display:inline-block;white-space:nowrap;font-size:12.00px;transform:scaleX(0.9644);transform-origin:0 0">Bikes</span></span></div>
<div class="abs" style="left:632px;top:556px;width:170px;height:23px;background:#efefef;border-top:1px dotted #e9e9e9"></div><svg class="abs" style="left:638px;top:562px" width="9" height="9" viewBox="0 0 9 9"><rect x=".5" y=".5" width="8" height="8" fill="#fff" stroke="#9898a4"/><path d="M2 4.5H7M4.5 2V7" stroke="#444" stroke-width="1"/></svg><div class="abs" style="left:654px;top:561px;width:12px;height:12px;background:#fff;border:1px solid #222"></div><div class="abs" style="left:673px;top:560.0px"><span style="display:inline-block;width:19.00px;height:15.6px;vertical-align:top;"><span style="display:inline-block;white-space:nowrap;font-size:12.00px;transform:scaleX(0.9189);transform-origin:0 0">Bus</span></span></div>
<div class="abs" style="left:632px;top:579px;width:170px;height:23px;background:#efefef;border-top:1px dotted #e9e9e9"></div><svg class="abs" style="left:638px;top:585px" width="9" height="9" viewBox="0 0 9 9"><rect x=".5" y=".5" width="8" height="8" fill="#fff" stroke="#9898a4"/><path d="M2 4.5H7M4.5 2V7" stroke="#444" stroke-width="1"/></svg><div class="abs" style="left:654px;top:584px;width:12px;height:12px;background:#fff;border:1px solid #222"></div><div class="abs" style="left:673px;top:583.0px"><span style="display:inline-block;width:21.40px;height:15.6px;vertical-align:top;"><span style="display:inline-block;white-space:nowrap;font-size:12.00px;transform:scaleX(0.9440);transform-origin:0 0">Taxi</span></span></div>
<div class="abs" style="left:632px;top:602px;width:170px;height:23px;background:#efefef;border-top:1px dotted #e9e9e9"></div><svg class="abs" style="left:638px;top:608px" width="9" height="9" viewBox="0 0 9 9"><rect x=".5" y=".5" width="8" height="8" fill="#fff" stroke="#9898a4"/><path d="M2 4.5H7M4.5 2V7" stroke="#444" stroke-width="1"/></svg><div class="abs" style="left:654px;top:607px;width:12px;height:12px;background:#fff;border:1px solid #222"></div><div class="abs" style="left:673px;top:606.0px"><span style="display:inline-block;width:47.90px;height:15.6px;vertical-align:top;"><span style="display:inline-block;white-space:nowrap;font-size:12.00px;transform:scaleX(0.9330);transform-origin:0 0">SmartCar</span></span></div>
<div class="abs" style="left:632px;top:625px;width:170px;height:23px;background:#efefef;border-top:1px dotted #e9e9e9"></div><svg class="abs" style="left:638px;top:631px" width="9" height="9" viewBox="0 0 9 9"><rect x=".5" y=".5" width="8" height="8" fill="#fff" stroke="#9898a4"/><path d="M2 4.5H7M4.5 2V7" stroke="#444" stroke-width="1"/></svg><div class="abs" style="left:654px;top:630px;width:12px;height:12px;background:#fff;border:1px solid #222"></div><div class="abs" style="left:673px;top:629.0px"><span style="display:inline-block;width:56.50px;height:15.6px;vertical-align:top;"><span style="display:inline-block;white-space:nowrap;font-size:12.00px;transform:scaleX(0.9013);transform-origin:0 0">WheelChair</span></span></div>
<div class="abs" style="left:624px;top:392px;width:95px;height:28px;border:4px solid #d93540;border-radius:6px"></div>
<div class="abs" style="left:635px;top:504px;width:72px;height:30px;border:4px solid #d93540;border-radius:6px"></div>
<div class="abs" style="left:9px;top:752px;width:825px;height:20px;border:1px solid #8c8c8c;border-top-color:#a0a0a0;border-right-color:#a0a0a0;background:#f0f0f0"><div class="abs" style="left:199px;top:1px;width:1px;height:16px;background:#d0d0d0"></div></div>
<div class="btn" style="left:599px;top:780px;width:73px;height:23px;border:1.5px solid #2d6e9c;border-radius:4.5px"><div class="abs" style="left:22.5px;top:2.6px"><span style="display:inline-block;width:24.60px;height:16.0px;vertical-align:top;"><span style="display:inline-block;white-space:nowrap;font-size:12.30px;transform:scaleX(1.0000);transform-origin:0 0">確定</span></span></div></div>
<div class="btn" style="left:680px;top:780px;width:73px;height:23px"><div class="abs" style="left:23px;top:2.5px"><span style="display:inline-block;width:24.60px;height:16.0px;vertical-align:top;"><span style="display:inline-block;white-space:nowrap;font-size:12.30px;transform:scaleX(1.0000);transform-origin:0 0">取消</span></span></div></div>
<div class="btn" style="left:761px;top:780px;width:73px;height:23px"><div class="abs" style="left:23px;top:2.5px"><span style="display:inline-block;width:27.00px;height:16.0px;vertical-align:top;font-weight:500;"><span style="display:inline-block;white-space:nowrap;font-size:12.30px;transform:scaleX(0.7317);transform-origin:0 0">ヘルプ</span></span></div></div>
</div>
<div id="frame"></div>
</body>
</html>
